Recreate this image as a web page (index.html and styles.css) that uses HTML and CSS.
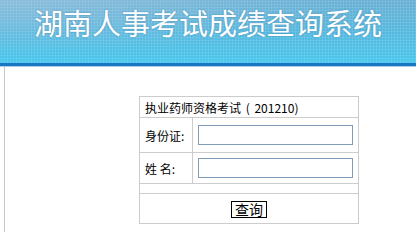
FILE: index.html
```html
<!DOCTYPE html>
<html lang="zh-CN">
<head>
    <meta charset="UTF-8">
    <title>湖南人事考试成绩查询系统</title>
    <link rel="stylesheet" href="styles.css">
</head>
<body>
    <header class="banner">
        <h1>湖南人事考试成绩查询系统</h1>
    </header>
    <div class="main">
        <table class="query">
            <tr class="row-title">
                <td colspan="2">执业药师资格考试 ( 201210)</td>
            </tr>
            <tr class="row-id">
                <td class="label">身份证:</td>
                <td><input type="text" class="field"></td>
            </tr>
            <tr class="row-name">
                <td class="label">姓&nbsp;名:</td>
                <td><input type="text" class="field"></td>
            </tr>
            <tr class="row-gap">
                <td colspan="2"></td>
            </tr>
            <tr class="row-btn">
                <td colspan="2"><button class="submit">查询</button></td>
            </tr>
        </table>
    </div>
</body>
</html>
```

FILE: styles.css
```css
body {
    margin: 0;
    padding: 0;
    background: #fff;
    font-family: "Noto Sans CJK SC", sans-serif;
    font-size: 12px;
    color: #000;
}
.banner {
    height: 63px;
    background-color: #52bde2;
    background-image:
        radial-gradient(circle, rgba(255, 255, 255, 0.18) 0.8px, transparent 1.2px),
        radial-gradient(ellipse at 0 0, rgba(170, 200, 225, 0.5) 0, rgba(170, 200, 225, 0) 60%),
        linear-gradient(#6ab0d4, #56b9df 50%, #49c6ec);
    background-size: 3px 3px, 100% 100%, 100% 100%;
    border-bottom: 3px solid #1878c4;
    box-shadow: 0 1px 0 #a9cfe6;
    overflow: hidden;
}
.banner h1 {
    margin: 0;
    padding: 5px 0 0 34px;
    font-size: 29px;
    line-height: 34px;
    font-weight: normal;
    color: #fff;
    text-shadow: 0 0 2px rgba(30, 90, 140, 0.5);
}
.main {
    margin: 1px 0 0 4px;
    border-left: 1px solid #c8c8c8;
    padding: 29px 0 0 134px;
    height: 136px;
}
.query {
    border-collapse: collapse;
    border: 1px solid #cccccc;
    width: 220px;
}
.query td {
    border: 1px solid #cccccc;
    padding: 0 0 0 5px;
}
.row-title td {
    height: 20px;
    word-spacing: 2px;
}
.row-id td {
    height: 34px;
}
.row-name td {
    height: 30px;
}
.row-gap td {
    height: 9px;
}
.row-btn td {
    height: 29px;
    text-align: center;
    padding: 0;
}
.query .label {
    width: 47px;
}
.field {
    display: block;
    width: 155px;
    height: 20px;
    box-sizing: border-box;
    border: 1px solid #7f9db9;
    margin: 0;
    padding: 0;
}
.submit {
    width: 36px;
    height: 17px;
    padding: 0;
    border: 1px solid #000;
    background: #fff;
    font-family: "Noto Sans CJK SC", sans-serif;
    font-size: 14px;
    line-height: 15px;
    color: #000;
    margin-top: 1px;
}
```
